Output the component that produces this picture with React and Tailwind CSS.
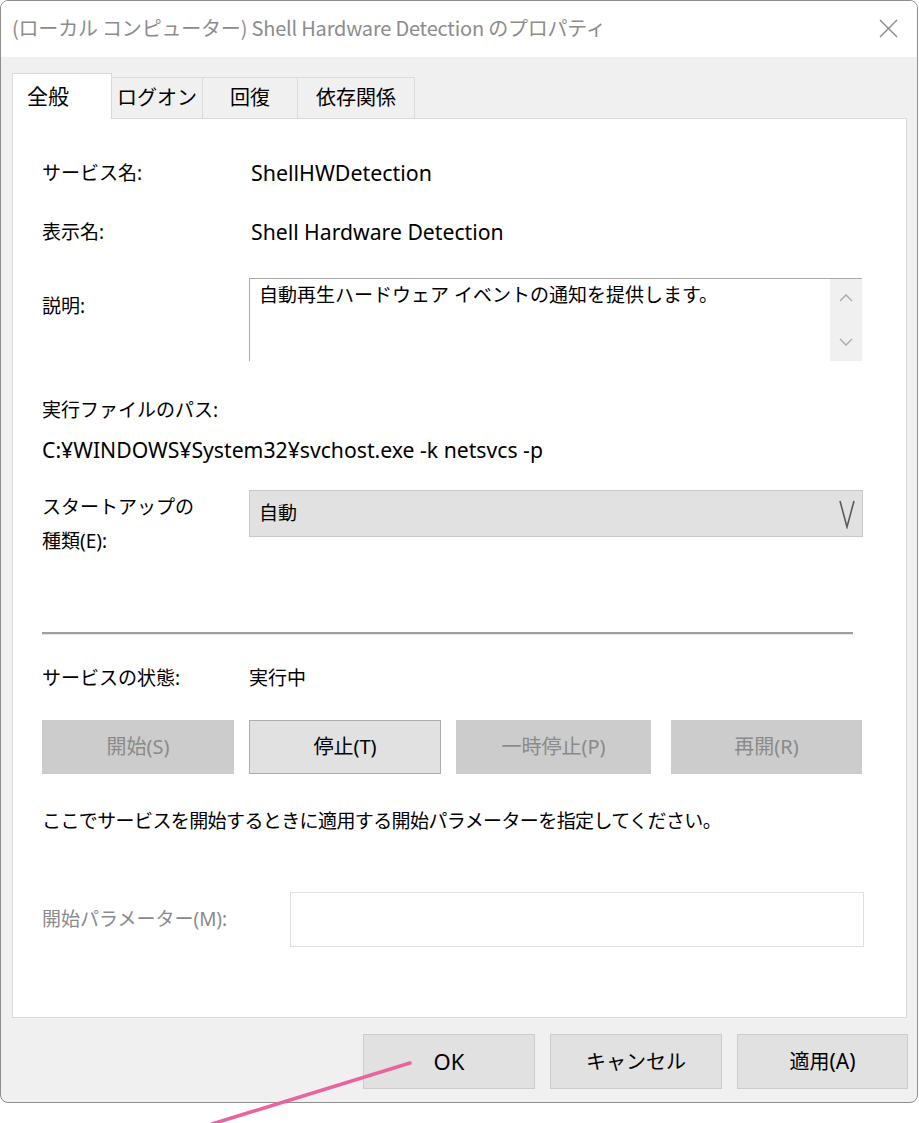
import React from "react";

const cjk = { fontFamily: "'Noto Sans CJK JP', 'Noto Sans', sans-serif" };
const ui = { fontFamily: "'Noto Sans', 'Noto Sans CJK JP', sans-serif" };

function Tab({ label, active, w }) {
  if (active) {
    return (
      <div
        className={`${w} h-[46px] -mb-px bg-white border border-[#d9d9d9] border-b-0 flex items-center pl-[14px] text-[21px] text-black relative z-10`}
      >
        {label}
      </div>
    );
  }
  return (
    <div
      className={`${w} h-[41px] mt-[4px] bg-[#f0f0f0] border border-[#dcdcdc] border-b-0 border-l-0 flex items-center justify-center text-[20px] text-black`}
    >
      {label}
    </div>
  );
}

function ActionButton({ label, disabled, w }) {
  return (
    <div
      className={`${w} h-[54px] flex items-center justify-center text-[20px] ${
        disabled
          ? "bg-[#cccccc] text-[#8a8a8a]"
          : "bg-[#e1e1e1] border border-[#adadad] text-black"
      }`}
    >
      {label}
    </div>
  );
}

function DialogButton({ children, w }) {
  return (
    <div
      className={`${w} h-[55px] bg-[#e1e1e1] border border-[#cccccc] flex items-center justify-center text-[20px] text-black`}
    >
      {children}
    </div>
  );
}

export default function App() {
  return (
    <div className="relative w-[919px] h-[1123px] bg-white overflow-hidden" style={ui}>
      <div className="w-[918px] h-[1103px] border border-[#8e8e8e] rounded-[8px] overflow-hidden flex flex-col bg-[#f0f0f0]">
        {/* title bar */}
        <div className="h-[56px] bg-white flex items-center justify-between pl-[11px] pr-[19px] shrink-0">
          <span className="text-[20px] text-[#8c8c8c] tracking-[-0.2px] mb-[2px]" style={cjk}>
            (ローカル コンピューター) Shell Hardware Detection のプロパティ
          </span>
          <svg width="19" height="19" viewBox="0 0 19 19" className="mb-[2px]">
            <path d="M1 1 L18 18 M18 1 L1 18" stroke="#8a8a8a" strokeWidth="1.4" fill="none" />
          </svg>
        </div>

        {/* body */}
        <div className="flex-1 pt-[16px] pl-[11px]">
          <div className="flex items-start">
            <Tab label="全般" active w="w-[100px]" />
            <Tab label="ログオン" w="w-[91px]" />
            <Tab label="回復" w="w-[95px]" />
            <Tab label="依存関係" w="w-[117px]" />
          </div>

          <div className="w-[895px] h-[900px] bg-white border border-[#d9d9d9] pl-[29px] pt-[40px] text-[19px] text-black">
            <div className="flex h-[28px] items-center">
              <span className="w-[209px]">サービス名:</span>
              <span className="text-[21.4px]">ShellHWDetection</span>
            </div>
            <div className="flex h-[28px] items-center mt-[31px]">
              <span className="w-[209px]">表示名:</span>
              <span className="text-[21.2px]">Shell Hardware Detection</span>
            </div>

            <div className="flex mt-[32px]">
              <span className="w-[207px] mt-[14px] leading-[28px]">説明:</span>
              <div className="w-[613px] h-[83px] border-t border-l border-[#a9a9a9] flex">
                <div className="flex-1 pl-[9px] pt-[2px] leading-[28px]">
                  自動再生ハードウェア イベントの通知を提供します。
                </div>
                <div className="w-[32px] bg-[#f0f0f0] flex flex-col items-center justify-between py-[14px]">
                  <svg width="14" height="9" viewBox="0 0 14 9">
                    <path d="M1 8 L7 2 L13 8" stroke="#a8a8a8" strokeWidth="1.3" fill="none" />
                  </svg>
                  <svg width="14" height="9" viewBox="0 0 14 9">
                    <path d="M1 1 L7 7 L13 1" stroke="#a8a8a8" strokeWidth="1.3" fill="none" />
                  </svg>
                </div>
              </div>
            </div>

            <div className="h-[28px] flex items-center mt-[35px]">実行ファイルのパス:</div>
            <div className="h-[28px] flex items-center mt-[12px] text-[21.2px]">
              C:¥WINDOWS¥System32¥svchost.exe -k netsvcs -p
            </div>

            <div className="flex mt-[26px]">
              <div className="w-[207px] leading-[34px]">
                スタートアップの
                <br />
                種類(E):
              </div>
              <div className="w-[614px] h-[47px] bg-[#e1e1e1] border border-[#c8c8c8] flex items-center justify-between pl-[9px] pr-[6px]">
                <span>自動</span>
                <svg width="18" height="30" viewBox="0 0 18 30">
                  <path d="M2 2 L9 28 L16 2" stroke="#5a5a5a" strokeWidth="1.6" fill="none" />
                </svg>
              </div>
            </div>

            <div className="mt-[74px] w-[811px] h-[3px] border-t-2 border-[#a0a0a0] border-b border-b-[#e8e8e8]" />

            <div className="flex h-[28px] items-center mt-[29px]">
              <span className="w-[207px]">サービスの状態:</span>
              <span>実行中</span>
            </div>

            <div className="flex mt-[28px]">
              <ActionButton label="開始(S)" disabled w="w-[192px]" />
              <div className="w-[15px]" />
              <ActionButton label="停止(T)" w="w-[192px]" />
              <div className="w-[15px]" />
              <ActionButton label="一時停止(P)" disabled w="w-[195px]" />
              <div className="w-[20px]" />
              <ActionButton label="再開(R)" disabled w="w-[191px]" />
            </div>

            <div className="h-[28px] flex items-center mt-[33px] tracking-[-0.6px]">
              ここでサービスを開始するときに適用する開始パラメーターを指定してください。
            </div>

            <div className="flex items-center mt-[57px]">
              <span className="w-[248px] text-[#8a8a8a]">開始パラメーター(M):</span>
              <div className="w-[574px] h-[55px] bg-white border border-[#e0e0e0]" />
            </div>
          </div>

          <div className="flex justify-end pr-[9px] mt-[16px] gap-[15px]">
            <DialogButton w="w-[172px]">
              <span className="text-[22px]">OK</span>
            </DialogButton>
            <DialogButton w="w-[172px]">キャンセル</DialogButton>
            <DialogButton w="w-[171px]">
              適用<span className="text-[21px]">(A)</span>
            </DialogButton>
          </div>
        </div>
      </div>

      {/* pink pointer line */}
      <svg className="absolute left-0 top-0 pointer-events-none" width="919" height="1123">
        <line x1="410" y1="1063" x2="212" y2="1124" stroke="#e8649f" strokeWidth="3.5" strokeLinecap="round" />
      </svg>
    </div>
  );
}
